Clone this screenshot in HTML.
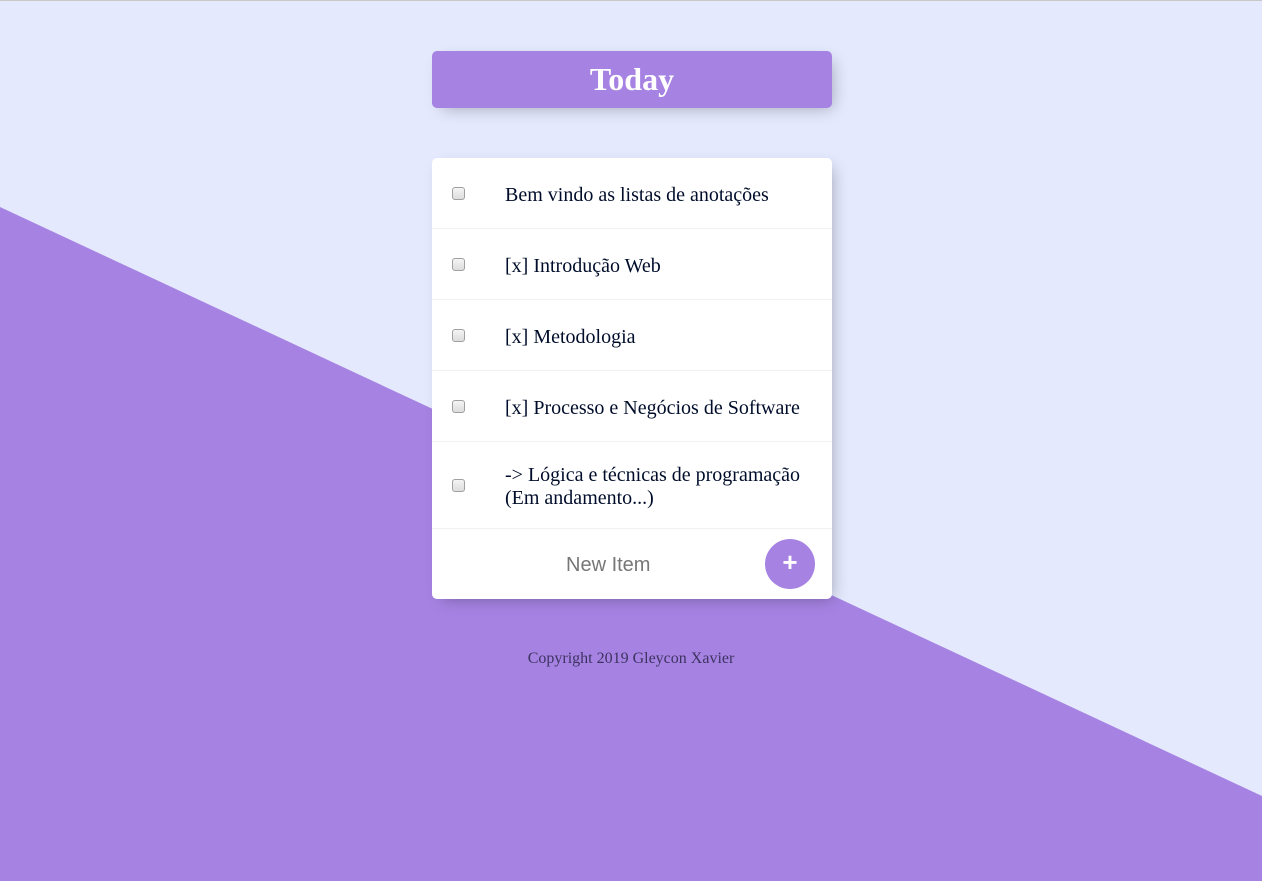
<!DOCTYPE html>
<html><head><meta charset="utf-8">
<style>
html,body{margin:0;padding:0;}
body{width:1262px;height:880px;position:relative;overflow:hidden;background:#E4E9FD;font-family:"Liberation Serif",serif;border-top:1px solid #c8c8c8;box-sizing:border-box;}
.bg{position:absolute;left:0;top:0;width:1262px;height:880px;}
.box{position:absolute;left:432px;width:400px;background:#fff;border-radius:5px;box-shadow:5px 5px 15px -5px rgba(0,0,0,0.3);}
.head{top:50px;height:57px;background:#A683E3;color:#fff;text-align:center;font-weight:bold;font-size:32px;line-height:57px;}
.list{top:157px;}
.item{position:relative;border-bottom:1px solid #F1F1F1;display:flex;align-items:center;color:#000d2a;font-size:20px;line-height:23px;}
.cb{position:absolute;left:20px;top:50%;margin-top:-6px;width:11px;height:11px;border:1px solid #a0a0a0;border-radius:3px;background:linear-gradient(#f4f4f4,#ddd);}
.txt{margin-left:73px;position:relative;top:2px;}
.newrow{height:70px;position:relative;}
.newrow span{position:absolute;left:134px;top:25px;font-family:"Liberation Sans",sans-serif;font-size:20px;color:#777;}
.plus{position:absolute;left:333px;top:10px;width:50px;height:50px;border-radius:50%;background:#A683E3;color:#fff;font-family:"Liberation Sans",sans-serif;font-weight:bold;font-size:26px;text-align:center;line-height:46px;}
.foot{position:absolute;top:649px;left:0;width:1262px;text-align:center;font-size:16px;color:#3d3360;}
</style></head><body>
<svg class="bg" viewBox="0 0 1262 880"><polygon points="0,206 1262,795 1262,880 0,880" fill="#A683E3"/></svg>
<div class="box head">Today</div>
<div class="box list">
 <div class="item" style="height:70px"><div class="cb"></div><div class="txt">Bem vindo as listas de anotações</div></div>
 <div class="item" style="height:70px"><div class="cb"></div><div class="txt">[x] Introdução Web</div></div>
 <div class="item" style="height:70px"><div class="cb"></div><div class="txt">[x] Metodologia</div></div>
 <div class="item" style="height:70px"><div class="cb"></div><div class="txt">[x] Processo e Negócios de Software</div></div>
 <div class="item" style="height:86px"><div class="cb"></div><div class="txt">-&gt; Lógica e técnicas de programação<br>(Em andamento...)</div></div>
 <div class="newrow"><span>New Item</span><div class="plus">+</div></div>
</div>
<div class="foot">Copyright 2019 Gleycon Xavier</div>
</body></html>
